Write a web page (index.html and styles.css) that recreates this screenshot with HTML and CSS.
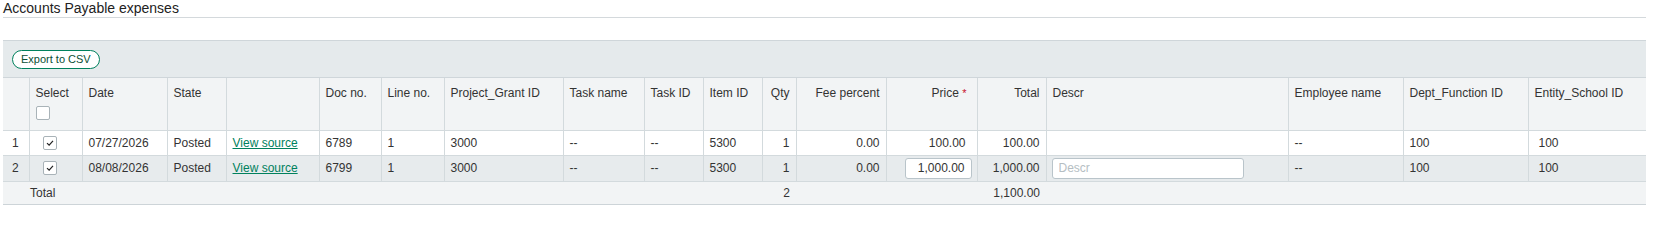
FILE: index.html
```html
<!doctype html>
<html lang="en">
  <head>
    <meta charset="UTF-8" />
    <title>Accounts Payable expenses</title>
    <link rel="stylesheet" href="styles.css">
  </head>
  <body>
    <div class="page">
      <h2 class="section-title">Accounts Payable expenses</h2>

      <div class="grid-panel">
        <div class="grid-toolbar">
          <button class="btn-outline">Export to CSV</button>
        </div>

        <table class="grid">
          <colgroup>
            <col class="c-rownum"><col class="c-select"><col class="c-date"><col class="c-state">
            <col class="c-source"><col class="c-doc"><col class="c-line"><col class="c-project">
            <col class="c-taskname"><col class="c-taskid"><col class="c-item"><col class="c-qty">
            <col class="c-fee"><col class="c-price"><col class="c-total"><col class="c-descr">
            <col class="c-employee"><col class="c-dept"><col class="c-entity">
          </colgroup>
          <thead>
            <tr>
              <th></th>
              <th>Select<span class="check-box"></span></th>
              <th>Date</th>
              <th>State</th>
              <th></th>
              <th>Doc no.</th>
              <th>Line no.</th>
              <th>Project_Grant ID</th>
              <th>Task name</th>
              <th>Task ID</th>
              <th>Item ID</th>
              <th class="num">Qty</th>
              <th class="num">Fee percent</th>
              <th class="num price">Price <span class="req">*</span></th>
              <th class="num">Total</th>
              <th>Descr</th>
              <th>Employee name</th>
              <th>Dept_Function ID</th>
              <th>Entity_School ID</th>
            </tr>
          </thead>
          <tbody>
            <tr class="row">
              <td class="rownum">1</td>
              <td class="select"><span class="check-box checked"><svg viewBox="0 0 14 14"><path d="M3.5 7.2 L6 9.6 L10.5 4.6"/></svg></span></td>
              <td>07/27/2026</td>
              <td>Posted</td>
              <td><a href="#" class="link">View source</a></td>
              <td>6789</td>
              <td>1</td>
              <td>3000</td>
              <td>--</td>
              <td>--</td>
              <td>5300</td>
              <td class="num">1</td>
              <td class="num">0.00</td>
              <td class="num price">100.00</td>
              <td class="num">100.00</td>
              <td></td>
              <td>--</td>
              <td>100</td>
              <td class="entity">100</td>
            </tr>
            <tr class="row row-alt">
              <td class="rownum">2</td>
              <td class="select"><span class="check-box checked"><svg viewBox="0 0 14 14"><path d="M3.5 7.2 L6 9.6 L10.5 4.6"/></svg></span></td>
              <td>08/08/2026</td>
              <td>Posted</td>
              <td><a href="#" class="link">View source</a></td>
              <td>6799</td>
              <td>1</td>
              <td>3000</td>
              <td>--</td>
              <td>--</td>
              <td>5300</td>
              <td class="num">1</td>
              <td class="num">0.00</td>
              <td class="num has-input"><input class="cell-input num-input" type="text" value="1,000.00"></td>
              <td class="num">1,000.00</td>
              <td class="has-input"><input class="cell-input descr-input" type="text" placeholder="Descr"></td>
              <td>--</td>
              <td>100</td>
              <td class="entity">100</td>
            </tr>
          </tbody>
          <tfoot>
            <tr class="total-row">
              <td></td>
              <td class="total-label">Total</td>
              <td colspan="9"></td>
              <td class="num">2</td>
              <td colspan="2"></td>
              <td class="num">1,100.00</td>
              <td colspan="4"></td>
            </tr>
          </tfoot>
        </table>
      </div>
    </div>
  </body>
</html>
```

FILE: styles.css
```css
/* Page basics */
body {
  margin: 0;
  background-color: #ffffff;
  color: #333333;
  font-family: "Liberation Sans", Arial, sans-serif;
  font-size: 12px;
}
.page {
  padding: 0 7px 0 3px;
}
.section-title {
  margin: 0;
  padding: 0 0 1px 0;
  height: 16px;
  font-size: 14px;
  font-weight: normal;
  line-height: 16px;
  color: #222222;
  border-bottom: 1px solid #d4d9dc;
}

/* Grid panel + toolbar */
.grid-panel {
  margin-top: 22px;
}
.grid-toolbar {
  display: flex;
  align-items: center;
  padding: 9px 9px 8px 9px;
  background-color: #e5eaec;
  border-top: 1px solid #cfd6da;
  border-bottom: 1px solid #cfd6da;
}
.btn-outline {
  height: 19px;
  padding: 0 8px;
  border: 1px solid #00815d;
  border-radius: 10px;
  background-color: #ffffff;
  color: #0b4f35;
  font-family: "Liberation Sans", Arial, sans-serif;
  font-size: 11px;
  line-height: 17px;
  cursor: pointer;
}

/* Table */
.grid {
  width: 100%;
  table-layout: fixed;
  border-collapse: collapse;
}
.c-rownum { width: 26px; }
.c-select { width: 53px; }
.c-date { width: 85px; }
.c-state { width: 59px; }
.c-source { width: 93px; }
.c-doc { width: 62px; }
.c-line { width: 63px; }
.c-project { width: 119px; }
.c-taskname { width: 81px; }
.c-taskid { width: 59px; }
.c-item { width: 59px; }
.c-qty { width: 34px; }
.c-fee { width: 90px; }
.c-price { width: 91px; }
.c-total { width: 69px; }
.c-descr { width: 242px; }
.c-employee { width: 115px; }
.c-dept { width: 125px; }
.c-entity { width: 118px; }

.grid th,
.grid td {
  padding: 0 6px;
  line-height: 14px;
  text-align: left;
  white-space: nowrap;
  overflow: hidden;
}
.grid th + th,
.grid td + td {
  border-left: 1px solid #d3dadd;
}
.grid thead tr {
  height: 52px;
}
.grid th {
  padding-top: 8px;
  vertical-align: top;
  font-weight: normal;
  background-color: #f2f4f5;
  border-bottom: 1px solid #d3dadd;
}
.grid th.price {
  padding-right: 10px;
}
.req {
  color: #c8102e;
  font-size: 11px;
  vertical-align: top;
}
.grid .num {
  text-align: right;
}
.grid tbody tr.row {
  height: 25px;
  background-color: #ffffff;
}
.grid tbody tr.row-alt {
  height: 26px;
  background-color: #e7ebed;
}
.grid tbody td {
  border-bottom: 1px solid #d3dadd;
}
.grid td.rownum {
  padding-left: 9px;
}
.grid td.select {
  padding-left: 13px;
}
.grid td.price {
  padding-right: 11px;
}
.grid td.has-input {
  padding-left: 5px;
  padding-right: 5px;
}
.grid td.entity {
  padding-left: 10px;
}
.link {
  color: #00815d;
  text-decoration: underline;
}

/* Checkbox */
.check-box {
  display: block;
  width: 12px;
  height: 12px;
  margin-top: 6px;
  border: 1px solid #a9b3b8;
  border-radius: 2px;
  background-color: #ffffff;
}
.grid td .check-box {
  margin-top: 0;
}
.check-box svg {
  display: block;
  width: 12px;
  height: 12px;
}
.check-box path {
  fill: none;
  stroke: #222222;
  stroke-width: 1.4;
}

/* Inline inputs */
.cell-input {
  display: block;
  box-sizing: border-box;
  height: 21px;
  padding: 0 6px;
  border: 1px solid #b9c4ca;
  border-radius: 3px;
  background-color: #ffffff;
  color: #333333;
  font-family: "Liberation Sans", Arial, sans-serif;
  font-size: 12px;
}
.num-input {
  width: 67px;
  margin-left: auto;
  text-align: right;
}
.descr-input {
  width: 192px;
}
.descr-input::placeholder {
  color: #b5bec3;
}

/* Total row */
.grid tfoot tr.total-row {
  height: 23px;
  background-color: #f2f4f5;
}
.grid tfoot td {
  border-left: none !important;
  border-bottom: 1px solid #cdd4d8;
}
.grid td.total-label {
  padding-left: 1px;
}
```
